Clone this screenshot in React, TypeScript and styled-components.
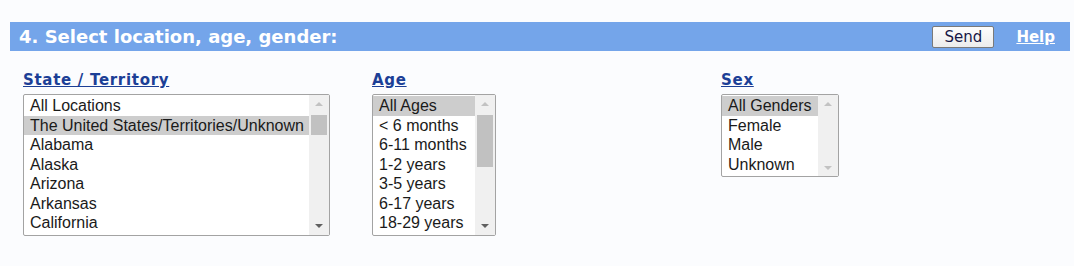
import React from "react";
import styled, { createGlobalStyle } from "styled-components";

const Global = createGlobalStyle`
  html, body { margin: 0; padding: 0; background: #fbfcfe; }
  body { width: 1074px; height: 266px; overflow: hidden; font-family: "DejaVu Sans", Verdana, sans-serif; }
`;

const Page = styled.div`
  padding: 22px 4px 0 10px;
`;

const Bar = styled.div`
  display: flex;
  align-items: center;
  height: 29px;
  background: #74a5ea;
  padding: 0 15px 0 9px;
`;

const Title = styled.h2`
  flex: 1;
  margin: 0;
  color: #ffffff;
  font-family: "DejaVu Sans", Verdana, sans-serif;
  font-weight: bold;
  font-size: 18px;
  letter-spacing: 0;
`;

const SendButton = styled.button`
  width: 62px;
  height: 22px;
  margin-right: 22px;
  padding: 0;
  border: 1px solid #7a7a7a;
  border-radius: 2px;
  background: linear-gradient(#fdfdfd, #ececec);
  color: #161646;
  font-family: "DejaVu Sans", Verdana, sans-serif;
  font-size: 15px;
`;

const HelpLink = styled.a`
  color: #ffffff;
  font-weight: bold;
  font-size: 15px;
  text-decoration: underline;
  font-family: "DejaVu Sans", Verdana, sans-serif;
`;

const Columns = styled.div`
  display: grid;
  grid-template-columns: 349px 349px 349px;
  padding: 20px 0 0 13px;
`;

const Column = styled.div`
  display: flex;
  flex-direction: column;
  align-items: flex-start;
`;

const Label = styled.a`
  color: #1c3f96;
  font-weight: bold;
  font-size: 15px;
  line-height: 18px;
  letter-spacing: 0.7px;
  text-decoration: underline;
  font-family: "DejaVu Sans", Verdana, sans-serif;
  margin-bottom: 5px;
`;

const ListBox = styled.div<{ $w: number }>`
  display: flex;
  width: ${(p) => p.$w}px;
  border: 1px solid #a3a3a3;
  border-radius: 2px;
  background: #ffffff;
  box-sizing: border-box;
`;

const Options = styled.div`
  flex: 1;
  padding: 1px 0 2px 0;
  min-width: 0;
`;

const Option = styled.div<{ $sel?: boolean }>`
  height: 19.5px;
  line-height: 19.5px;
  padding-left: 6px;
  font-family: "Liberation Sans", Arial, sans-serif;
  font-size: 16px;
  color: #1a1a1a;
  white-space: nowrap;
  background: ${(p) => (p.$sel ? "#cdcdcd" : "transparent")};
`;

const Scroll = styled.div`
  width: 20px;
  display: flex;
  flex-direction: column;
  background: #f0f0f0;
`;

const Arrow = styled.div<{ $dir: "up" | "down"; $on: boolean }>`
  height: 17px;
  display: flex;
  align-items: center;
  justify-content: center;
  &::after {
    content: "";
    border-left: 4px solid transparent;
    border-right: 4px solid transparent;
    ${(p) =>
      p.$dir === "up"
        ? `border-bottom: 4px solid ${p.$on ? "#606060" : "#c2c2c2"};`
        : `border-top: 4px solid ${p.$on ? "#606060" : "#c2c2c2"};`}
  }
`;

const Track = styled.div`
  flex: 1;
  padding: 3px 2px 0 2px;
`;

const Thumb = styled.div`
  background: #c1c1c1;
`;

type ListProps = {
  width: number;
  items: string[];
  selected: number;
  thumb?: number;
};

function List({ width, items, selected, thumb }: ListProps) {
  return (
    <ListBox $w={width}>
      <Options>
        {items.map((it, i) => (
          <Option key={it} $sel={i === selected}>
            {it}
          </Option>
        ))}
      </Options>
      <Scroll>
        <Arrow $dir="up" $on={false} />
        <Track>{thumb ? <Thumb style={{ height: thumb }} /> : null}</Track>
        <Arrow $dir="down" $on={!!thumb} />
      </Scroll>
    </ListBox>
  );
}

export default function App() {
  return (
    <>
      <Global />
      <Page>
        <Bar>
          <Title>4. Select location, age, gender:</Title>
          <SendButton>Send</SendButton>
          <HelpLink href="#">Help</HelpLink>
        </Bar>
        <Columns>
          <Column>
            <Label href="#">State / Territory</Label>
            <List
              width={307}
              selected={1}
              thumb={20}
              items={[
                "All Locations",
                "The United States/Territories/Unknown",
                "Alabama",
                "Alaska",
                "Arizona",
                "Arkansas",
                "California",
              ]}
            />
          </Column>
          <Column>
            <Label href="#">Age</Label>
            <List
              width={124}
              selected={0}
              thumb={52}
              items={[
                "All Ages",
                "< 6 months",
                "6-11 months",
                "1-2 years",
                "3-5 years",
                "6-17 years",
                "18-29 years",
              ]}
            />
          </Column>
          <Column>
            <Label href="#">Sex</Label>
            <List
              width={118}
              selected={0}
              items={["All Genders", "Female", "Male", "Unknown"]}
            />
          </Column>
        </Columns>
      </Page>
    </>
  );
}
